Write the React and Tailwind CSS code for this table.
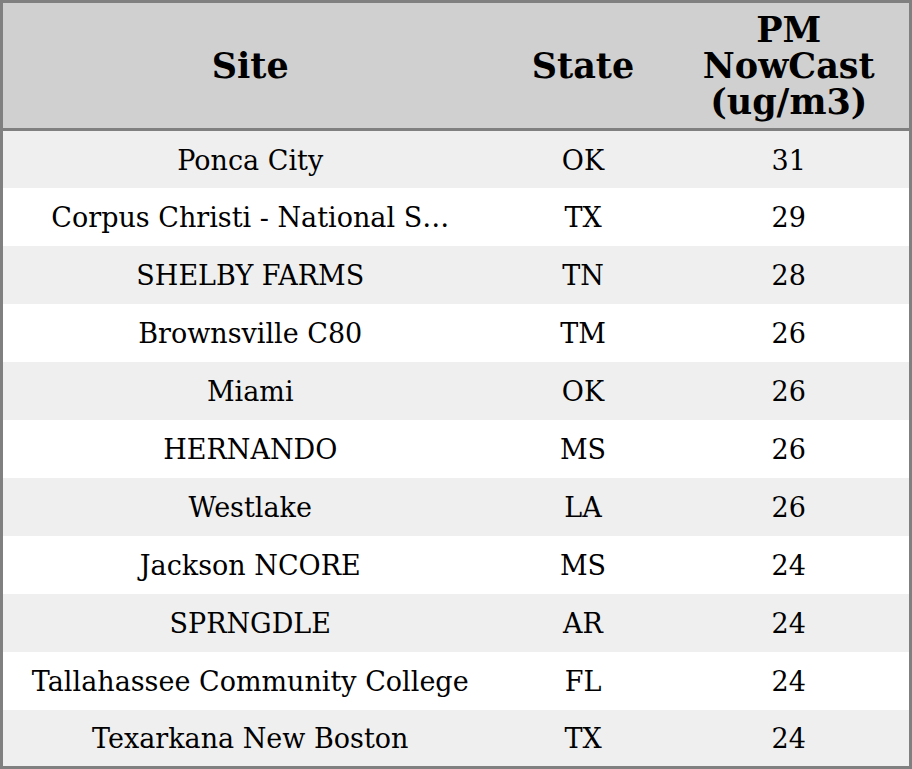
import React from "react";

const rows = [
  { site: "Ponca City", state: "OK", pm: 31 },
  { site: "Corpus Christi - National S…", state: "TX", pm: 29 },
  { site: "SHELBY FARMS", state: "TN", pm: 28 },
  { site: "Brownsville C80", state: "TM", pm: 26 },
  { site: "Miami", state: "OK", pm: 26 },
  { site: "HERNANDO", state: "MS", pm: 26 },
  { site: "Westlake", state: "LA", pm: 26 },
  { site: "Jackson NCORE", state: "MS", pm: 24 },
  { site: "SPRNGDLE", state: "AR", pm: 24 },
  { site: "Tallahassee Community College", state: "FL", pm: 24 },
  { site: "Texarkana New Boston", state: "TX", pm: 24 },
];

export default function App() {
  return (
    <div
      className="w-[912px] h-[769px] bg-white text-black"
      style={{ fontFamily: '"DejaVu Serif", serif' }}
    >
      <table className="w-full h-full border-collapse border-[3px] border-[#808080] table-fixed">
        <colgroup>
          <col className="w-[496px]" />
          <col className="w-[171px]" />
          <col />
        </colgroup>
        <thead>
          <tr className="bg-[#d0d0d0] h-[128px] border-b-[3px] border-[#808080]">
            <th className="text-[35px] leading-[36px] font-bold text-center align-middle">Site</th>
            <th className="text-[35px] leading-[36px] font-bold text-center align-middle">State</th>
            <th className="text-[35px] leading-[36px] font-bold text-center align-middle">
              PM
              <br />
              NowCast
              <br />
              (ug/m3)
            </th>
          </tr>
        </thead>
        <tbody>
          {rows.map((r, i) => (
            <tr key={i} className={`h-[58px] ${i % 2 === 0 ? "bg-[#efefef]" : "bg-white"}`}>
              <td className="text-[27px] pt-[3px] text-center align-middle whitespace-nowrap">{r.site}</td>
              <td className="text-[27px] pt-[3px] text-center align-middle">{r.state}</td>
              <td className="text-[27px] pt-[3px] text-center align-middle">{r.pm}</td>
            </tr>
          ))}
        </tbody>
      </table>
    </div>
  );
}
